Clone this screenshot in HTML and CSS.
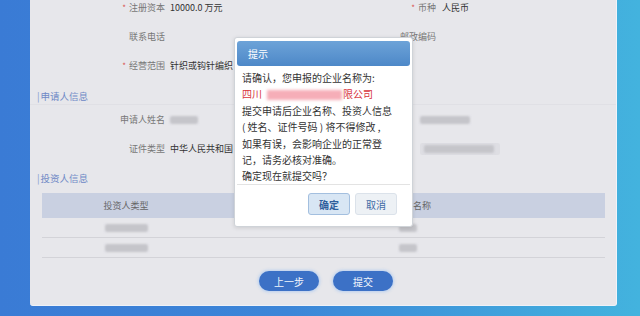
FILE: index.html
```html
<!DOCTYPE html>
<html lang="zh">
<head>
<meta charset="utf-8">
<link rel="stylesheet" href="styles.css">
</head>
<body>
<div class="page">
  <div class="panel">
    <div class="form-grid">
      <div class="label"><span class="star">*</span> 注册资本</div>
      <div class="value v1">10000.0 万元</div>
      <div class="label"><span class="star">*</span> 币种</div>
      <div class="value v2">人民币</div>

      <div class="label">联系电话</div>
      <div class="value v1"></div>
      <div class="label">邮政编码</div>
      <div class="value v2"></div>

      <div class="label"><span class="star">*</span> 经营范围</div>
      <div class="value v1">针织或钩针编织</div>
      <div class="label"></div>
      <div class="value v2"></div>
    </div>

    <div class="section-head"><span class="bar">|</span>申请人信息</div>

    <div class="form-grid form-grid--applicant">
      <div class="label">申请人姓名</div>
      <div class="value v1"><span class="redact r-name"></span></div>
      <div class="label"></div>
      <div class="value v2"><span class="redact r-right1"></span></div>

      <div class="label">证件类型</div>
      <div class="value v1">中华人民共和国</div>
      <div class="label"></div>
      <div class="value v2"><span class="input-box"><span class="redact r-right2"></span></span></div>
    </div>

    <div class="section-head section-head--second"><span class="bar">|</span>投资人信息</div>

    <div class="table">
      <div class="t-row t-head">
        <div class="t-cell c1">投资人类型</div>
        <div class="t-cell c2">名称</div>
      </div>
      <div class="t-row">
        <div class="t-cell c1"><span class="redact r-t1"></span></div>
        <div class="t-cell c2"><span class="redact r-t2"></span></div>
      </div>
      <div class="t-row">
        <div class="t-cell c1"><span class="redact r-t1"></span></div>
        <div class="t-cell c2"><span class="redact r-t2"></span></div>
      </div>
    </div>

    <div class="actions">
      <button class="pill">上一步</button>
      <button class="pill">提交</button>
    </div>
  </div>

  <div class="modal">
    <div class="modal-head">提示</div>
    <div class="modal-body">
      <div class="line">请确认，您申报的企业名称为:</div>
      <div class="line red">四川<span class="pink"></span>限公司</div>
      <div class="line">提交申请后企业名称、投资人信息</div>
      <div class="line">( 姓名、证件号码 ) 将不得修改 ,</div>
      <div class="line">如果有误，会影响企业的正常登</div>
      <div class="line">记，请务必核对准确。</div>
      <div class="line">确定现在就提交吗？</div>
    </div>
    <div class="modal-foot">
      <button class="mbtn ok">确定</button>
      <button class="mbtn cancel">取消</button>
    </div>
  </div>
</div>
</body>
</html>
```

FILE: styles.css
```css
* { box-sizing: border-box; }

html, body {
  margin: 0;
  padding: 0;
  width: 640px;
  height: 316px;
  overflow: hidden;
}

body {
  background: linear-gradient(90deg, #3a7bd5 0%, #3c86d8 45%, #43b3de 100%);
  font-family: "Noto Sans CJK SC", "Noto Sans", sans-serif;
  color: #333;
}

.page {
  position: relative;
  width: 640px;
  height: 316px;
}

.panel {
  margin-left: 30px;
  width: 587px;
  height: 306px;
  background: #e7e7eb;
  border-right: 1px solid #f1f4f9;
  border-bottom: 1px solid #eef2f8;
  border-radius: 0 0 3px 3px;
  display: flex;
  flex-direction: column;
  overflow: hidden;
}

.form-grid {
  display: grid;
  grid-template-columns: 135px 191px 80px 1fr;
  grid-auto-rows: 29px;
  align-items: center;
  font-size: 9px;
  margin-top: -7px;
}

.form-grid--applicant {
  grid-template-columns: 135px 191px 58px 1fr;
  margin-top: 0;
}

.label {
  text-align: right;
  color: #777;
  white-space: nowrap;
}

.star {
  color: #d9534f;
  font-size: 8px;
  margin-right: 1px;
}

.value {
  color: #333;
  white-space: nowrap;
  display: flex;
  align-items: center;
}

.v1 { padding-left: 5px; }
.v2 { padding-left: 6px; }

.section-head {
  margin-top: 7px;
  height: 18px;
  line-height: 18px;
  padding-left: 7px;
  font-size: 9.5px;
  color: #6f89c6;
  border-bottom: 1px solid #e0e0e5;
}

.section-head--second {
  margin-top: 6px;
  border-bottom: none;
}

.bar {
  color: #8299cc;
  margin-right: 1px;
}

.redact {
  display: inline-block;
  height: 8px;
  background: #c5c5ca;
  filter: blur(1.2px);
  border-radius: 2px;
}

.r-name { width: 28px; }
.r-right1 { width: 50px; }
.r-right2 { width: 70px; }
.r-t1 { width: 43px; }
.r-t2 { width: 18px; }

.input-box {
  display: inline-flex;
  align-items: center;
  width: 80px;
  height: 12px;
  padding-left: 4px;
  background: #dedee3;
  border-radius: 2px;
}

.table {
  margin: 6px 11px 0 12px;
  font-size: 9px;
}

.t-row {
  display: grid;
  grid-template-columns: 168px 1fr;
  height: 20px;
  align-items: center;
  border-bottom: 1px solid #d3d3d8;
}

.t-head {
  height: 25px;
  background: #c9d0e1;
  color: #666;
  border-bottom: none;
}

.t-cell {
  display: flex;
  justify-content: center;
  align-items: center;
}

.t-head .c2 {
  justify-content: flex-start;
  padding-left: 203px;
}

.actions {
  margin-top: 13px;
  display: flex;
  justify-content: center;
  gap: 14px;
  padding-left: 6px;
}

.pill {
  width: 60px;
  height: 20px;
  border: none;
  border-radius: 10px;
  background: #3c71c6;
  color: #f2f6fc;
  font-family: "Noto Sans CJK SC", sans-serif;
  font-size: 10px;
  padding: 0;
  box-shadow: 0 0 3px 1px rgba(180, 205, 240, 0.9);
}

.modal {
  position: absolute;
  left: 234px;
  top: 37px;
  width: 179px;
  height: 190px;
  background: #ffffff;
  border: 1px solid #cfd3d8;
  border-radius: 3px;
  padding: 3px 2px 0 2px;
  box-shadow: 0 1px 4px rgba(0, 0, 0, 0.12);
  display: flex;
  flex-direction: column;
}

.modal-head {
  height: 25px;
  line-height: 25px;
  padding-left: 11px;
  border-radius: 3px;
  background: linear-gradient(180deg, #6da3d8 0%, #4d88c8 100%);
  color: #ffffff;
  font-size: 10px;
}

.modal-body {
  padding: 4px 0 0 5px;
  font-size: 10px;
  line-height: 16.4px;
  color: #333;
  height: 119px;
  border-bottom: 1px solid #e3e3e3;
}

.line { white-space: nowrap; }

.red { color: #d7343c; display: flex; align-items: center; }

.pink {
  display: inline-block;
  width: 75px;
  height: 10px;
  margin: 0 1px 0 5px;
  background: #f6aeb8;
  filter: blur(1.5px);
}

.modal-foot {
  display: flex;
  justify-content: flex-end;
  gap: 5px;
  padding: 8px 13px 0 0;
}

.mbtn {
  width: 42px;
  height: 22px;
  padding: 0;
  font-family: "Noto Sans CJK SC", sans-serif;
  font-size: 10px;
  border-radius: 3px;
}

.ok {
  background: #d8e6f4;
  border: 1px solid #a3bfdf;
  color: #2f5e9c;
  font-weight: bold;
}

.cancel {
  background: #edf1f5;
  border: 1px solid #dbe2ea;
  color: #3f6aa5;
}
```
